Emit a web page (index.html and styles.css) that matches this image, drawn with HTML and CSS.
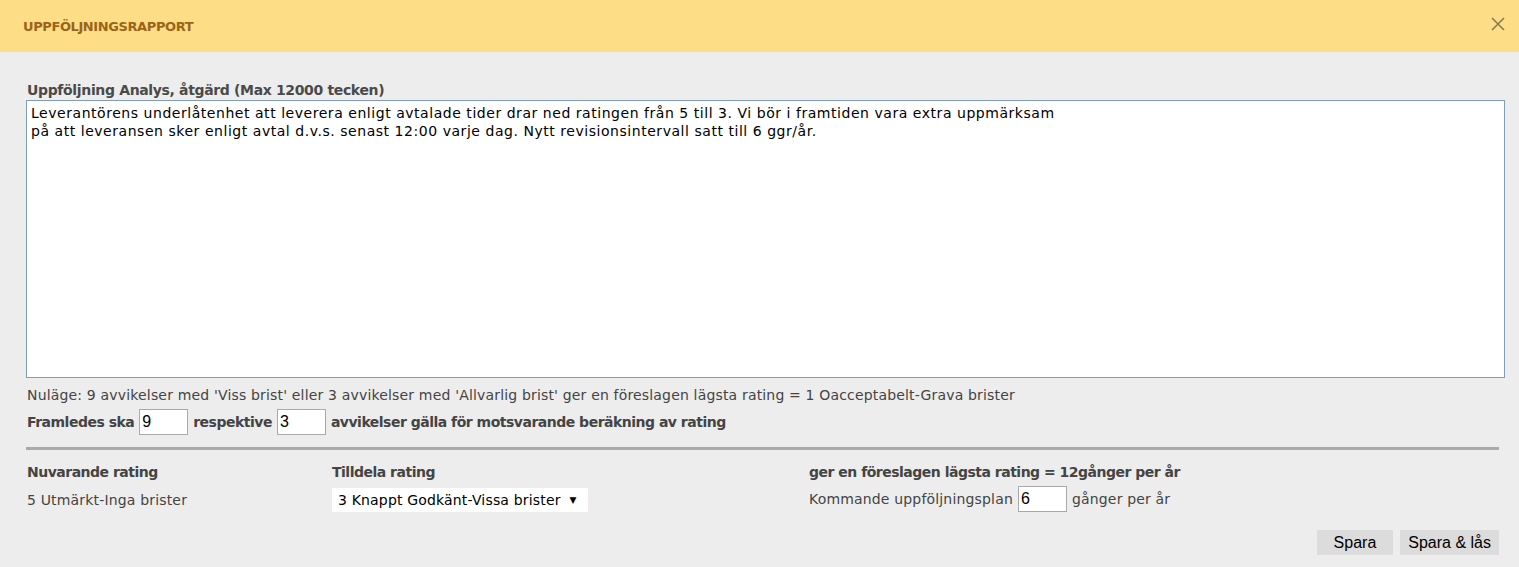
FILE: index.html
```html
<!DOCTYPE html>
<html lang="sv">
<head>
<meta charset="utf-8">
<title>Uppföljningsrapport</title>
<link rel="stylesheet" href="styles.css">
</head>
<body>
<div class="dialog">
  <div class="dialog-header">
    <span class="dialog-title">UPPFÖLJNINGSRAPPORT</span>
    <span class="close">
      <svg width="14" height="14" viewBox="0 0 14 14"><path d="M1 1 L13 13 M13 1 L1 13" stroke="#8a7a55" stroke-width="1.6" fill="none"/></svg>
    </span>
  </div>
  <div class="dialog-body">
    <div class="field-label">Uppföljning Analys, åtgärd (Max 12000 tecken)</div>
    <div class="textarea">Leverantörens underlåtenhet att leverera enligt avtalade tider drar ned ratingen från 5 till 3. Vi bör i framtiden vara extra uppmärksam<br>på att leveransen sker enligt avtal d.v.s. senast 12:00 varje dag. Nytt revisionsintervall satt till 6 ggr/år.</div>
    <div class="status">Nuläge: 9 avvikelser med 'Viss brist' eller 3 avvikelser med 'Allvarlig brist' ger en föreslagen lägsta rating = 1 Oacceptabelt-Grava brister</div>
    <div class="future">
      <span>Framledes ska</span>
      <span class="num-input">9</span>
      <span>respektive</span>
      <span class="num-input">3</span>
      <span>avvikelser gälla för motsvarande beräkning av rating</span>
    </div>
    <div class="divider"></div>
    <div class="ratings">
      <div class="col col-1">
        <div class="col-head">Nuvarande rating</div>
        <div class="col-value">5 Utmärkt-Inga brister</div>
      </div>
      <div class="col col-2">
        <div class="col-head">Tilldela rating</div>
        <div class="select"><span>3 Knappt Godkänt-Vissa brister</span><span class="arrow">▼</span></div>
      </div>
      <div class="col col-3">
        <div class="col-head">ger en föreslagen lägsta rating = 12gånger per år</div>
        <div class="col-value plan"><span>Kommande uppföljningsplan</span><span class="num-input">6</span><span>gånger per år</span></div>
      </div>
    </div>
    <div class="actions">
      <span class="btn">Spara</span>
      <span class="btn btn-lock">Spara &amp; lås</span>
    </div>
  </div>
</div>
</body>
</html>
```
FILE: styles.css
```css
html, body {
  margin: 0;
  padding: 0;
  background: #ededed;
}
body {
  font-family: "DejaVu Sans", sans-serif;
  color: #444;
  letter-spacing: 0.17px;
}
.dialog {
  width: 1519px;
  height: 567px;
  overflow: hidden;
}
.dialog-header {
  height: 52px;
  background: #fedd87;
  display: flex;
  align-items: center;
  justify-content: space-between;
  padding: 0 14px 0 23px;
}
.dialog-title {
  font-weight: bold;
  font-size: 13px;
  letter-spacing: -0.4px;
  color: #9c6418;
}
.close {
  display: flex;
  margin-top: -4px;
}
.dialog-body {
  padding: 28px 13px 0 26px;
}
.field-label {
  font-weight: bold;
  font-size: 14px;
  letter-spacing: -0.35px;
  color: #4a4a4a;
  padding-left: 1px;
  line-height: 20px;
}
.textarea {
  background: #fff;
  border: 1px solid #7f9db9;
  height: 264px;
  width: 1468px;
  padding: 3px 5px 9px 4px;
  font-size: 14px;
  letter-spacing: 0.54px;
  line-height: 18px;
  color: #000;
}
.status {
  font-size: 14px;
  line-height: 20px;
  margin-top: 7px;
  padding-left: 1px;
}
.future {
  display: flex;
  align-items: center;
  gap: 3px;
  font-weight: bold;
  font-size: 14px;
  letter-spacing: -0.5px;
  padding-left: 1px;
  margin-top: 4px;
}
.num-input {
  display: inline-block;
  width: 45px;
  height: 24px;
  line-height: 24px;
  background: #fff;
  border: 1px solid #a9a9a9;
  font-family: "Liberation Sans", sans-serif;
  font-weight: normal;
  font-size: 16px;
  letter-spacing: 0;
  color: #000;
  padding-left: 2px;
  margin: 0 2px;
}
.divider {
  height: 3px;
  background: #aaa;
  margin-top: 12px;
  width: 1473px;
}
.ratings {
  display: flex;
  margin-top: 12px;
  padding-left: 1px;
  font-size: 14px;
}
.col-head {
  font-weight: bold;
  letter-spacing: -0.5px;
  line-height: 20px;
}
.col-value {
  margin-top: 8px;
  line-height: 20px;
}
.col-1 { width: 305px; }
.col-2 { width: 477px; }
.select {
  margin-top: 6px;
  display: flex;
  align-items: center;
  gap: 9px;
  width: 243px;
  height: 24px;
  background: #fff;
  padding: 0 7px 0 6px;
  color: #000;
}
.select .arrow {
  font-size: 9px;
}
.plan {
  display: flex;
  align-items: center;
  gap: 3px;
  margin-top: 4px;
}
.actions {
  display: flex;
  justify-content: flex-end;
  gap: 7px;
  margin-top: 18px;
  width: 1473px;
}
.btn {
  background: #dcdcdc;
  font-family: "Liberation Sans", sans-serif;
  font-size: 16px;
  letter-spacing: 0;
  color: #000;
  height: 25px;
  line-height: 25px;
  padding: 0 17px;
}
.btn-lock { padding: 0 8px; }
```
